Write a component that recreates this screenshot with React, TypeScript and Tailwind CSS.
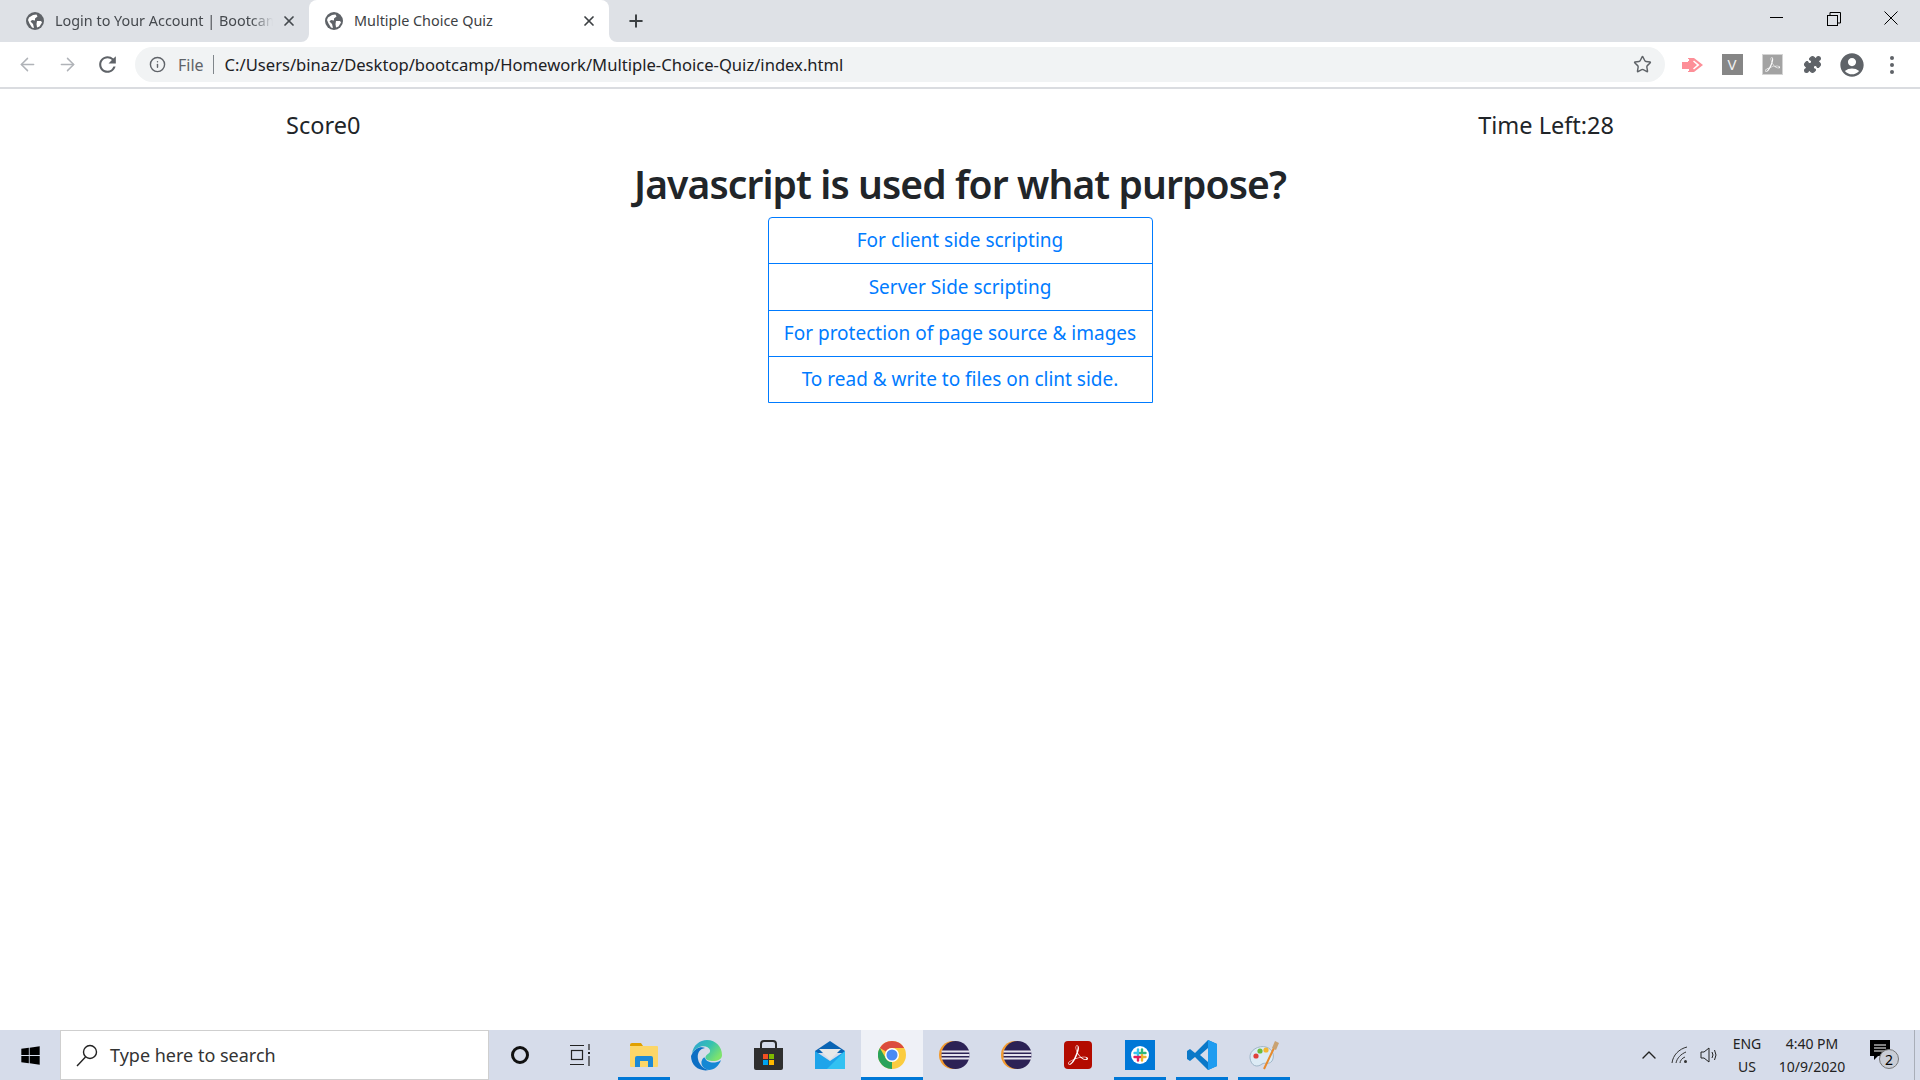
import { ArrowLeft, ArrowRight, ChevronUp, Info, Plus, Puzzle, Star, X } from 'lucide-react';
import { FaWindows } from 'react-icons/fa';
import { MdAccountCircle, MdRefresh } from 'react-icons/md';
import { SiAdobeacrobatreader } from 'react-icons/si';

const answers = [
    'For client side scripting',
    'Server Side scripting',
    'For protection of page source & images',
    'To read & write to files on clint side.',
];

// favicon used on both tabs
const Globe = () => (
    <svg width="18" height="18" viewBox="0 0 18 18" className="shrink-0">
        <circle cx="9" cy="9" r="9" fill="#5f6368" />
        <path d="M3 5.5 L7 3 L10.5 2.5 L11.5 4.5 L9 6.5 L9 8.5 L6 8 L4.5 9.5 L7 12 L8 16 L6 15.5 L3.5 11.5 L2 8 Z" fill="#fff" />
        <path d="M11 9 L15 9 L16 10.5 L13.5 14.5 L11 15.5 L10.5 12 Z" fill="#fff" />
    </svg>
);

// the little flared corners of the active tab
const TabFlare = ({ side }: { side: 'left' | 'right' }) => (
    <svg width="8" height="8" viewBox="0 0 8 8" className={side === 'left' ? 'absolute bottom-0 -left-2' : 'absolute bottom-0 -right-2'}>
        <path d={side === 'left' ? 'M8 0 A8 8 0 0 1 0 8 L8 8 Z' : 'M0 0 A8 8 0 0 0 8 8 L0 8 Z'} fill="#fff" />
    </svg>
);

const TabStrip = () => (
    <div className="h-[42px] shrink-0 bg-[#dee1e6] flex items-end">
        <div className="w-[309px] h-[42px] pl-[26px] pr-[12px] flex items-center">
            <Globe />
            <span className="ml-[11px] w-[218px] overflow-hidden whitespace-nowrap text-[14.4px] text-[#45494e] [mask-image:linear-gradient(to_right,#000_90%,transparent)]">Login to Your Account | Bootcamp</span>
            <X size={16} strokeWidth={2.6} className="ml-auto text-[#45494e]" />
        </div>
        <div className="relative w-[300px] h-[42px] pl-[16px] pr-[12px] bg-white rounded-t-lg flex items-center">
            <TabFlare side="left" />
            <Globe />
            <span className="ml-[11px] whitespace-nowrap text-[14.4px] text-[#3c4043]">Multiple Choice Quiz</span>
            <X size={16} strokeWidth={2.6} className="ml-auto text-[#3c4043]" />
            <TabFlare side="right" />
        </div>
        <div className="ml-[17px] h-[42px] flex items-center">
            <Plus size={20} strokeWidth={2.4} className="text-[#3c4043]" />
        </div>
        <div className="ml-auto h-[42px] flex">
            <div className="w-[57px] flex items-start justify-center pt-[17px]">
                <div className="w-[13px] h-px bg-black" />
            </div>
            <div className="w-[57px] flex items-start justify-center pt-[12px]">
                <svg width="14" height="14" viewBox="0 0 14 14" fill="none" stroke="#000" strokeWidth="1">
                    <rect x="0.5" y="3.5" width="10" height="10" />
                    <path d="M3 3.5 V0.5 H13.5 V11 H10.5" />
                </svg>
            </div>
            <div className="w-[58px] flex items-start justify-center pt-[11px]">
                <svg width="14" height="14" viewBox="0 0 14 14" stroke="#000" strokeWidth="1">
                    <path d="M0.5 0.5 L13.5 13.5 M13.5 0.5 L0.5 13.5" />
                </svg>
            </div>
        </div>
    </div>
);

const Toolbar = () => (
    <div className="h-[47px] shrink-0 bg-white border-b-2 border-[#dadce0] pt-[5px] pb-[5px] pl-[7px] pr-[8px] flex items-center">
        <div className="w-[40px] flex justify-center"><ArrowLeft size={21} strokeWidth={1.7} className="text-[#b0b3b8]" /></div>
        <div className="w-[40px] flex justify-center"><ArrowRight size={21} strokeWidth={1.7} className="text-[#b0b3b8]" /></div>
        <div className="w-[40px] flex justify-center"><MdRefresh size={25} className="text-[#5f6368]" /></div>
        <div className="ml-[8px] w-[1530px] h-[35px] rounded-full bg-[#f1f3f4] pl-[14px] pr-[13px] flex items-center">
            <Info size={17} strokeWidth={2} className="text-[#5f6368]" />
            <span className="ml-[12px] text-[16px] text-[#5f6368]">File</span>
            <div className="ml-[9px] w-px h-[19px] bg-[#80868b]" />
            <span className="ml-[11px] pt-px text-[16.6px] text-[#202124] whitespace-nowrap">C:/Users/binaz/Desktop/bootcamp/Homework/Multiple-Choice-Quiz/index.html</span>
            <Star size={19} strokeWidth={1.8} className="ml-auto text-[#5f6368]" />
        </div>
        <div className="ml-[7px] w-[40px] flex justify-center">
            <svg width="21" height="14" viewBox="0 0 21 14">
                <rect x="0" y="4" width="6" height="7" fill="#fd8f98" />
                <path d="M6 0 H12 L21 7 L12 14 H6 Z" fill="#fd8f98" />
                <path d="M12 2.5 L17.5 7 L12 11.5 L11 10.5 L15 7 L11 3.5 Z" fill="#fff" />
                <rect x="6" y="1" width="1" height="2" fill="#fff" />
                <rect x="6" y="11" width="1" height="2" fill="#fff" />
            </svg>
        </div>
        <div className="w-[40px] flex justify-center">
            <div className="w-[21px] h-[21px] bg-[#868686] text-[#f0f0f0] text-[15px] flex items-center justify-center">V</div>
        </div>
        <div className="w-[40px] flex justify-center">
            <div className="w-[21px] h-[21px] bg-[#a3a3a3] border border-[#d4d4d4] flex items-center justify-center">
                <SiAdobeacrobatreader size={15} className="text-white" />
            </div>
        </div>
        <div className="w-[40px] flex justify-center"><Puzzle size={19} strokeWidth={1.6} fill="currentColor" className="text-[#5f6368]" /></div>
        <div className="w-[40px] flex justify-center"><MdAccountCircle size={28} className="text-[#5f6368]" /></div>
        <div className="w-[40px] flex flex-col items-center gap-[3px]">
            <div className="w-[4px] h-[4px] rounded-full bg-[#5f6368]" />
            <div className="w-[4px] h-[4px] rounded-full bg-[#5f6368]" />
            <div className="w-[4px] h-[4px] rounded-full bg-[#5f6368]" />
        </div>
    </div>
);

const Quiz = () => (
    <main className="flex-1 bg-white pt-[18px] pl-[286px] pr-[306px]">
        <div className="flex justify-between text-[23.5px] leading-[36px] text-[#212529]">
            <span>Score0</span>
            <span>Time Left:28</span>
        </div>
        <h1 className="-ml-[286px] -mr-[306px] mt-[17px] text-center text-[39px] tracking-[-0.9px] leading-[48px] font-semibold text-[#212529]">Javascript is used for what purpose?</h1>
        <div className="-ml-[286px] -mr-[306px] mt-[9px] flex justify-center">
            <div className="w-[385px] flex flex-col border border-[#007bff] rounded-t-[4px] text-[#007bff] text-[19px]">
                {answers.map((a, i) => (
                    <div key={a} className={i < 3 ? 'h-[46.25px] border-b border-[#007bff] flex items-center justify-center whitespace-nowrap' : 'h-[45.5px] flex items-center justify-center whitespace-nowrap'}>
                        {a}
                    </div>
                ))}
            </div>
        </div>
    </main>
);

const Slot = ({ active, open, children }: { active?: boolean; open?: boolean; children: React.ReactNode }) => (
    <div className={active ? 'relative w-[62px] h-full flex items-center justify-center bg-[#eff1f7]' : 'relative w-[62px] h-full flex items-center justify-center'}>
        {children}
        {open && <div className="absolute bottom-0 left-[5px] right-[5px] h-[3px] bg-[#0078d7]" />}
        {active && <div className="absolute bottom-0 left-0 right-0 h-[3px] bg-[#0078d7]" />}
    </div>
);

const Explorer = () => (
    <svg width="28" height="24" viewBox="0 0 28 24">
        <path d="M0 2 Q0 0 2 0 H11 L13 3 H0 Z" fill="#e0a000" />
        <rect x="0" y="3" width="28" height="21" rx="1" fill="#fcd667" />
        <path d="M5 24 V15 Q5 13 7 13 H21 Q23 13 23 15 V24 H18 V18 H10 V24 Z" fill="#1c8ad6" />
    </svg>
);

const Edge = () => (
    <svg width="31" height="31" viewBox="0 0 31 31">
        <defs>
            <linearGradient id="edgeTop" x1="0" y1="0" x2="1" y2="0.6">
                <stop offset="0" stopColor="#2f9fd9" />
                <stop offset="0.55" stopColor="#35c1b0" />
                <stop offset="1" stopColor="#7ee36c" />
            </linearGradient>
        </defs>
        <path d="M1 14 C2 5 9 0 16 0 C25 0 31 7 31 15 C31 19 27 21 22 21 C18 21 15 20 14.5 18 C14 14 20 14 19 10 C18 7 14 5.5 10 6.5 C5 8 2 11 1 14 Z" fill="url(#edgeTop)" />
        <path d="M1 14 C4 8 10 6 14 8 C8 9 6 14 7 19 C8 25 13 29 18 30 C9 32 0 26 0 16 Z" fill="#0c6fc4" />
        <path d="M14 18 C15 21 19 23 24 22.5 C27 22 29 21 30 20 C28 26 23 30 18 30 C12 29 9 24 11 20 C12 18 13 17 14 18 Z" fill="#1487d4" />
    </svg>
);

const Store = () => (
    <svg width="29" height="30" viewBox="0 0 29 30">
        <path d="M7 8 V4 Q7 1 10 1 H19 Q22 1 22 4 V8" fill="none" stroke="#2b2b2b" strokeWidth="2" />
        <path d="M0 8 H29 V28 Q29 30 27 30 H2 Q0 30 0 28 Z" fill="#2f2f2f" />
        <rect x="9" y="14" width="5" height="5" fill="#f25022" />
        <rect x="15" y="14" width="5" height="5" fill="#7fba00" />
        <rect x="9" y="20" width="5" height="5" fill="#00a4ef" />
        <rect x="15" y="20" width="5" height="5" fill="#ffb900" />
    </svg>
);

const Mail = () => (
    <svg width="30" height="28" viewBox="0 0 30 28">
        <path d="M0 10 L15 0 L30 10 V12 H0 Z" fill="#0a64b4" />
        <path d="M4 8 H26 L15 19 Z" fill="#e8e8e8" />
        <path d="M0 10 L15 20 L30 10 V28 H0 Z" fill="#1ea4ea" />
        <path d="M30 10 V28 H12 Z" fill="#32c1f2" />
    </svg>
);

const Chrome = () => (
    <svg width="28" height="28" viewBox="0 0 48 48">
        <circle cx="24" cy="24" r="24" fill="#fbcc3f" />
        <path d="M24 0 A24 24 0 0 1 44.8 12 H24 A12 12 0 0 0 13.6 18 L3.2 12 A24 24 0 0 1 24 0 Z" fill="#dc4c3e" />
        <path d="M3.2 12 L13.6 30 A12 12 0 0 0 24 36 L24 48 A24 24 0 0 1 3.2 12 Z" fill="#2aa35a" />
        <circle cx="24" cy="24" r="12" fill="#fff" />
        <circle cx="24" cy="24" r="9.5" fill="#4a8af4" />
    </svg>
);

const Eclipse = () => (
    <svg width="31" height="28" viewBox="0 0 31 28">
        <circle cx="14" cy="14" r="14" fill="#f29a2e" />
        <circle cx="16.5" cy="14" r="14" fill="#2c2255" />
        <rect x="2.5" y="9.5" width="28" height="2" fill="#e5e3ee" />
        <rect x="2.5" y="13" width="28" height="2" fill="#e5e3ee" />
        <rect x="2.5" y="16.5" width="28" height="2" fill="#e5e3ee" />
    </svg>
);

const Acrobat = () => (
    <div className="w-[28px] h-[28px] rounded-[4px] bg-[#b30b00] flex items-center justify-center">
        <SiAdobeacrobatreader size={20} className="text-white" />
    </div>
);

const Slack = () => (
    <div className="w-[30px] h-[30px] bg-[#0078d7] flex items-center justify-center">
        <div className="w-[18px] h-[18px] rounded-full bg-white flex items-center justify-center">
            <svg width="14" height="14" viewBox="0 0 14 14" strokeWidth="2.4" strokeLinecap="round">
                <path d="M5 1.5 V7 " stroke="#36c5f0" />
                <path d="M1.5 5 H4" stroke="#36c5f0" />
                <path d="M7 5 H12.5" stroke="#2eb67d" />
                <path d="M9 1.5 V3" stroke="#2eb67d" />
                <path d="M9 7 V12.5" stroke="#ecb22e" />
                <path d="M10 9 H12.5" stroke="#ecb22e" />
                <path d="M1.5 9 H7" stroke="#e01e5a" />
                <path d="M5 10 V12.5" stroke="#e01e5a" />
            </svg>
        </div>
    </div>
);

const VsCode = () => (
    <svg width="30" height="30" viewBox="0 0 30 30">
        <path d="M21 0 L30 4 V26 L21 30 L8 17 L3 21 L0 19 V11 L3 9 L8 13 Z M21 8 L13 15 L21 22 Z" fill="#0a78c8" fillRule="evenodd" />
        <path d="M21 0 L30 4 V26 L21 30 Z" fill="#1f9cf0" />
    </svg>
);

const Paint = () => (
    <svg width="30" height="30" viewBox="0 0 30 30">
        <path d="M1 18 C0 10 10 5 17 7 C24 9 26 16 23 21 C20 25 16 22 13 24 C8 28 2 26 1 18 Z" fill="#dcebf5" stroke="#9fb6c8" strokeWidth="1" />
        <circle cx="7" cy="16" r="2.6" fill="#e0413a" />
        <circle cx="11" cy="11" r="2.6" fill="#6cbb3c" />
        <circle cx="17" cy="10" r="2.6" fill="#f2b632" />
        <path d="M15 29 L25 8" stroke="#e88a2c" strokeWidth="2" />
        <path d="M23 8 L26 1 L30 3 L27 10 Z" fill="#c9a272" />
    </svg>
);

const Taskbar = () => (
    <div className="h-[50px] shrink-0 bg-[#d6dcea] flex text-[#1c1c1c]">
        <div className="w-[60px] flex items-center justify-center"><FaWindows size={21} className="text-black" /></div>
        <div className="w-[429px] h-full bg-white border border-[#cfcfcf] pl-[15px] flex items-center">
            <svg width="22" height="23" viewBox="0 0 22 23" fill="none" stroke="#222" strokeWidth="1.4">
                <circle cx="14" cy="8" r="6.5" />
                <path d="M9.5 13 L1 22" />
            </svg>
            <span className="ml-[12px] text-[18px] text-[#333]">Type here to search</span>
        </div>
        <div className="w-[61px] flex items-center justify-center">
            <div className="w-[18px] h-[18px] rounded-full border-[3px] border-[#111]" />
        </div>
        <div className="w-[61px] flex items-center justify-center">
            <svg width="22" height="22" viewBox="0 0 22 22" fill="none" stroke="#222" strokeWidth="1.2">
                <path d="M0 1.5 H14 M0 20.5 H14" />
                <rect x="1.5" y="6.5" width="11" height="9" />
                <path d="M19 0 V6 M19 12 V22" />
                <rect x="18" y="8" width="2" height="2" fill="#222" stroke="none" />
            </svg>
        </div>
        <div className="flex h-full ml-[2px]">
            <Slot open><Explorer /></Slot>
            <Slot><Edge /></Slot>
            <Slot><Store /></Slot>
            <Slot><Mail /></Slot>
            <Slot active><Chrome /></Slot>
            <Slot><Eclipse /></Slot>
            <Slot><Eclipse /></Slot>
            <Slot><Acrobat /></Slot>
            <Slot open><Slack /></Slot>
            <Slot open><VsCode /></Slot>
            <Slot open><Paint /></Slot>
        </div>
        <div className="ml-auto flex items-center h-full pr-[5px] text-[14px] text-[#222]">
            <ChevronUp size={24} strokeWidth={1.4} />
            <svg width="18" height="18" viewBox="0 0 18 18" fill="none" stroke="#333" strokeWidth="1" className="ml-[10px]">
                <path d="M1 17 C2 9 8 3 16 1 M5 17 C6 12 10 8 15 6 M9 17 C9 15 11 12 14 11" />
                <circle cx="14.5" cy="15.5" r="1.5" fill="#333" stroke="none" />
            </svg>
            <svg width="20" height="18" viewBox="0 0 20 18" fill="none" stroke="#222" strokeWidth="1" className="ml-[11px]">
                <path d="M1 6 H4 L9 2 V16 L4 12 H1 Z" />
                <path d="M12 6 Q14 9 12 12 M14.5 4 Q17.5 9 14.5 14" />
            </svg>
            <div className="ml-[5px] w-[44px] flex flex-col items-center leading-[23px]">
                <span>ENG</span>
                <span>US</span>
            </div>
            <div className="ml-px w-[84px] flex flex-col items-center leading-[23px]">
                <span>4:40 PM</span>
                <span>10/9/2020</span>
            </div>
            <div className="relative ml-[16px] w-[30px] h-[30px]">
                <svg width="22" height="22" viewBox="0 0 22 22" className="absolute left-0 top-0">
                    <path d="M0 0 H20 V16 H8 L4 20 V16 H0 Z" fill="#000" />
                    <path d="M4 5 H16 M4 8 H16 M4 11 H16" stroke="#fff" strokeWidth="1" />
                </svg>
                <div className="absolute left-[9px] top-[9px] w-[20px] h-[20px] rounded-full bg-[#c9cdd6] border border-[#777] text-[14px] text-black flex items-center justify-center">2</div>
            </div>
            <div className="ml-[14px] w-px h-full bg-[#a9aeb8]" />
        </div>
    </div>
);

export default function App() {
    return (
        <div className="w-[1920px] h-[1080px] overflow-hidden flex flex-col font-['Noto_Sans',sans-serif]">
            <TabStrip />
            <Toolbar />
            <Quiz />
            <Taskbar />
        </div>
    );
}
